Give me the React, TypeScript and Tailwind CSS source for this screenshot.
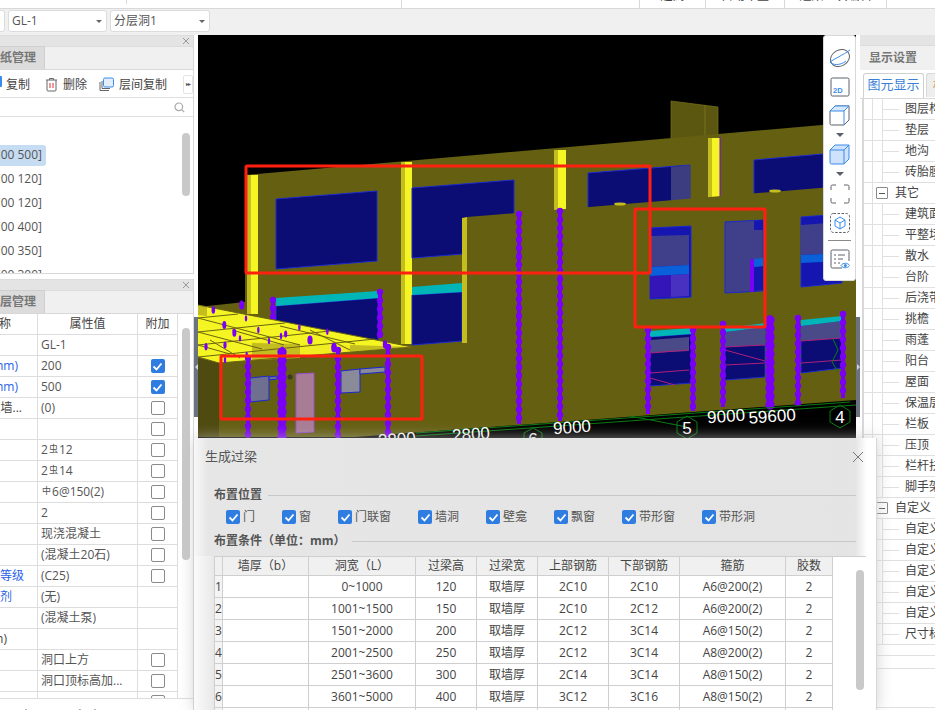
import React from 'react';

const bar = '#7a00f5';

// beaded rebar column in the 3D view
function Rebar({ x, y1, y2, w = 4 }: { x: number; y1: number; y2: number; w?: number }) {
  return (
    <g stroke={bar}>
      <line x1={x} y1={y1} x2={x} y2={y2} strokeWidth={w} />
      <line x1={x} y1={y1} x2={x} y2={y2} strokeWidth={w + 2.4} strokeLinecap="round" strokeDasharray="0.1 8.4" />
    </g>
  );
}

function Poly({ p, f, s, sw = 1 }: { p: string; f: string; s?: string; sw?: number }) {
  return <polygon points={p} fill={f} stroke={s} strokeWidth={s ? sw : 0} />;
}

function Column({ x, top, bottom, split, w }: { x: number; top: number; bottom: number; split: number; w: number }) {
  return (
    <g>
      <rect x={x} y={top} width={split} height={bottom - top} fill="#c4bd20" />
      <rect x={x + split} y={top} width={w - split} height={bottom - top} fill="#f5f523" />
    </g>
  );
}

const slabDots: number[][] = [
  [55, 825, 1.8], [140, 810, 2.6], [88, 870, 2], [153, 850, 1.2], [118, 893, 2], [190, 885, 1.2],
  [313, 877, 1.2], [397, 890, 1.2], [272, 897, 1.6], [258, 903, 1.2], [135, 910, 1.2], [222, 918, 1.2],
  [345, 915, 2.6], [33, 935, 1.6], [90, 930, 1.6], [417, 938, 2.8], [570, 928, 2.2], [262, 945, 1.6], [90, 975, 1.2], [155, 960, 1.2],
];

function Scene() {
  return (
    <svg viewBox="198 35 658 675" className="block w-[658px] h-[675px]">
      <rect x="198" y="35" width="658" height="675" fill="#000" />

      {/* rear wall and what sits on it */}
      <Poly p="671,101 718,107 718,138 671,141" f="#5c5710" s="#777118" sw={0.7} />
      <line x1="705" y1="105" x2="705" y2="138" stroke="#77721a" />
      <Poly p="198,307 245,302 245,175 856,122 856,345 245,400 198,400" f="#655f12" />
      <Column x={247} top={175} bottom={314} split={3.5} w={11} />
      <Column x={401} top={162} bottom={344} split={4} w={11} />
      <Column x={554} top={150} bottom={210} split={4} w={12} />
      <Column x={708} top={138} bottom={198} split={4} w={12} />
      <line x1="720" y1="137" x2="720" y2="198" stroke={bar} />
      <Poly p="276,199 377,191 377,261 276,269" f="#0b0c74" s="#1a2ad0" />
      <Poly p="412,188 514,180 514,250 412,258" f="#0b0c74" s="#1a2ad0" />
      <Poly p="588,173 690,165 690,208 588,216" f="#0b0c74" s="#1a2ad0" />
      <Poly p="671,167 690,165 690,208 671,210" f="#3c3c80" />
      <Poly p="754,160 823,154 823,200 754,205" f="#0b0c74" s="#1a2ad0" />
      <Poly p="276,306 378,298 378,350 276,350" f="#0b0c74" s="#1a2ad0" />
      <Poly p="276,298 378,291 378,298 276,306" f="#00b5b8" />
      <Poly p="412,295 462,292 462,341 412,345" f="#0b0c74" s="#1a2ad0" />
      <Poly p="412,287 462,283 462,292 412,295" f="#00b5b8" />
      <Rebar x={273} y1={300} y2={318} />
      <Rebar x={380} y1={292} y2={338} />

      {/* front wall and low wall */}
      <Poly p="198,358 219,363 219,437 198,437" f="#4f4a10" />
      <Poly p="467,217 856,185 856,400 355,437 219,437 219,363 412,347 467,343" f="#655f12" />
      <Poly p="462,218 467,217 467,343 462,343" f="#c4bd20" />
      <ellipse cx="620" cy="204" rx="6" ry="1.6" fill="#c4bd20" />
      <ellipse cx="775" cy="191" rx="6" ry="1.6" fill="#c4bd20" />

      {/* upper windows of the front wall */}
      <Poly p="650,228 691,226 691,297 650,299" f="#1515b0" s="#1a2ad0" />
      <Poly p="650,236 689,235 689,265 650,267" f="#40408a" />
      <Poly p="650,276 689,274 689,296 650,298" f="#3415b8" />
      <Poly p="671,275 689,274 689,296 671,297" f="#4830c0" />
      <Poly p="650,267 689,265 689,274 650,276" f="#0a60d8" />
      <Poly p="725,222 763,220 763,291 725,293" f="#40408a" s="#1a2ad0" />
      <Poly p="754,221 763,220 763,230 754,230" f="#1515b0" />
      <Poly p="754,267 763,266 763,290 754,291" f="#1515b0" />
      <Poly p="754,259 763,258 763,266 754,267" f="#0a60d8" />
      <line x1="752" y1="261" x2="752" y2="290" stroke={bar} strokeWidth="4" strokeLinecap="round" />
      <Poly p="801,217 842,214 842,283 801,287" f="#1515b0" s="#1a2ad0" />
      <Poly p="801,225 842,222 842,253 801,255" f="#40408a" />
      <Poly p="801,255 842,253 842,261 801,263" f="#0a60d8" />

      {/* lower windows of the front wall */}
      <Poly p="650,337 691,334 691,383 650,386" f="#0b0c74" s="#1a2ad0" />
      <Poly p="650,340 689,337 689,351 650,353" f="#4a4a88" />
      <Poly p="650,331 691,328 691,334 650,337" f="#00b5b8" />
      <polyline points="650,353 689,350" stroke="#b0207a" fill="none" />
      <polyline points="650,373 689,370" stroke="#b0207a" fill="none" />
      <polyline points="650,378 675,385" stroke="#b0207a" fill="none" />
      <Poly p="725,332 765,327 765,377 725,380" f="#0b0c74" s="#1a2ad0" />
      <Poly p="725,332 765,327 765,345 725,347" f="#4a4a88" />
      <Poly p="725,328 765,323 765,327 725,332" f="#00b5b8" />
      <polyline points="725,347 765,345" stroke="#b0207a" fill="none" />
      <polyline points="725,365 765,363" stroke="#b0207a" fill="none" />
      <polyline points="725,350 765,361" stroke="#b0207a" fill="none" />
      <Poly p="801,326 842,321 842,368 801,373" f="#0b0c74" s="#1a2ad0" />
      <Poly p="801,326 842,321 842,338 801,341" f="#4a4a88" />
      <Poly p="801,320 842,316 842,321 801,326" f="#00b5b8" />
      <polyline points="801,341 842,338" stroke="#b0207a" fill="none" />
      <polyline points="801,363 842,360" stroke="#b0207a" fill="none" />
      <polyline points="833,339 838,350 832,362 838,372" stroke="#0a7a1a" fill="none" />

      <Rebar x={519} y1={214} y2={424} />
      <Rebar x={560} y1={211} y2={421} />
      <Rebar x={648} y1={330} y2={414} />
      <Rebar x={693} y1={330} y2={411} />
      <Rebar x={723} y1={324} y2={407} />
      <Rebar x={770} y1={320} y2={405} w={7} />
      <Rebar x={798} y1={318} y2={403} />
      <Rebar x={843} y1={314} y2={398} />

      {/* yellow slab */}
      <Poly p="198,305 412,347 219,363 198,357" f="#f5f523" />
      <Poly p="198,305 207,307 207,316 198,315" f="#c4bd20" />
      <Poly p="252,342 412,347 358,351 252,360" f="#f0ee22" />
      <Poly p="252,343 300,344 300,358 252,360" f="#c4bd20" />
      <Poly p="350,345 412,347 358,351 350,352" f="#c4bd20" />
      <g stroke="#6a6410" strokeWidth="1">
        <line x1="198" y1="318" x2="300" y2="345" />
        <line x1="198" y1="332" x2="262" y2="349" />
        <line x1="198" y1="345" x2="230" y2="354" />
        <line x1="198" y1="318" x2="238" y2="314" />
        <line x1="198" y1="332" x2="285" y2="323" />
        <line x1="198" y1="345" x2="330" y2="331" />
        <line x1="198" y1="357" x2="375" y2="339" />
        <line x1="232" y1="330" x2="284" y2="345" />
        <line x1="280" y1="326" x2="355" y2="344" />
        <line x1="310" y1="330" x2="350" y2="350" />
        <line x1="210" y1="340" x2="240" y2="358" />
        <line x1="198" y1="305" x2="412" y2="347" />
        <line x1="219" y1="363" x2="412" y2="347" />
        <line x1="198" y1="357" x2="219" y2="363" />
      </g>
      {slabDots.map(([x, y, r], i) => (
        <ellipse key={i} cx={195 + x / 3} cy={35 + y / 3} rx={r} ry={r + 2} fill={bar} />
      ))}

      {/* low wall openings */}
      <Poly p="250,378 269,376 269,400 250,402" f="#6f6f90" s="#1a2ad0" />
      <Poly p="269,377 277,376 277,379 269,380" f="#6f6f90" s="#1a2ad0" />
      <Poly p="296,374 314,373 314,432 296,433" f="#a97c96" s="#9a50d0" />
      <circle cx="290" cy="377" r="2.5" fill="#3a3a20" />
      <Poly p="341,371 360,369 360,392 341,393" f="#8a8a98" s="#1a2ad0" />
      <Poly p="360,369 385,367 385,372 360,374" f="#8a8a98" s="#1a2ad0" />
      <Rebar x={248} y1={358} y2={437} />
      <Rebar x={282} y1={352} y2={437} w={7} />
      <Rebar x={338} y1={350} y2={437} />
      <Rebar x={388} y1={347} y2={437} />

      {/* axis grid below the building */}
      <g stroke="#0a7a12" strokeWidth="1" fill="none">
        <line x1="416" y1="433" x2="850" y2="402" />
        <line x1="416" y1="436" x2="856" y2="405" />
        <line x1="630" y1="416" x2="687" y2="427" />
        <polygon points="687,416 697,422 697,433 687,439 677,433 677,422" />
        <polygon points="533,428 542,433 542,443 533,449 524,443 524,433" />
        <polygon points="840,405 850,411 850,422 840,428 830,422 830,411" />
      </g>
      <g fill="#fff" fontSize="17" fontFamily="'Liberation Sans', sans-serif" textAnchor="middle">
        <text x="397" y="445" transform="rotate(-4 397 440)">3800</text>
        <text x="471" y="440" transform="rotate(-4 471 434)">2800</text>
        <text x="572" y="433" transform="rotate(-4 572 427)">9000</text>
        <text x="726" y="422" transform="rotate(-4 726 415)">9000</text>
        <text x="772" y="422" transform="rotate(-4 772 415)">59600</text>
        <text x="533" y="445">6</text>
        <text x="687" y="434">5</text>
        <text x="840" y="423">4</text>
      </g>

      {/* marked regions */}
      <g fill="none" stroke="#ff2010" strokeWidth="3" strokeLinejoin="round">
        <rect x="246" y="166" width="404" height="107" rx="1" />
        <rect x="635" y="209" width="130" height="118" rx="1" />
        <rect x="221" y="356" width="201" height="63" rx="1" />
      </g>
    </svg>
  );
}

function ToolbarIcons() {
  const grey = '#5b6068';
  const blue = '#3b8bea';
  return (
    <div className="absolute right-0 top-0 w-[33px] h-[246px] bg-white border border-[#d8d8d8] rounded-[3px] flex flex-col items-center pt-[11px]">
      <svg width="22" height="22" viewBox="0 0 22 22" fill="none">
        <ellipse cx="11" cy="11" rx="10" ry="8" transform="rotate(-30 11 11)" stroke={grey} />
        <path d="M1 15C5 12 14 8 21 3" stroke={blue} />
        <path d="M1 15C3 18 11 19 17 14" stroke={blue} />
      </svg>
      <svg width="20" height="20" viewBox="0 0 20 20" fill="none" className="mt-[8px]">
        <rect x="1" y="1" width="18" height="18" rx="1.5" stroke={grey} />
        <text x="3" y="16" fontSize="7.5" fontWeight="700" fill={blue} fontFamily="'Liberation Sans', sans-serif">2D</text>
      </svg>
      <svg width="21" height="21" viewBox="0 0 21 21" fill="none" className="mt-[8px]">
        <path d="M1 6L6 1H20V15L15 20H2.5A1.5 1.5 0 0 1 1 18.5Z" stroke={grey} />
        <path d="M1 6L6 1H20L15 6Z" fill="#d8e8fb" stroke={blue} />
        <path d="M15 6V20M15 6L20 1" stroke={blue} />
      </svg>
      <div className="mt-[7px] w-0 h-0 border-x-[4px] border-x-transparent border-t-[4px] border-t-[#5b6068]" />
      <svg width="21" height="21" viewBox="0 0 21 21" fill="none" className="mt-[7px]">
        <path d="M1 6L6 1H20V15L15 20H2.5A1.5 1.5 0 0 1 1 18.5Z" fill="#cfe2fb" stroke={blue} />
        <path d="M1 6H15L20 1M15 6V20" stroke={blue} />
      </svg>
      <div className="mt-[7px] w-0 h-0 border-x-[4px] border-x-transparent border-t-[4px] border-t-[#5b6068]" />
      <svg width="20" height="20" viewBox="0 0 20 20" fill="none" stroke={grey} className="mt-[8px]">
        <path d="M1 6V2.5A1.5 1.5 0 0 1 2.5 1H6M14 1H17.5A1.5 1.5 0 0 1 19 2.5V6M19 14V17.5A1.5 1.5 0 0 1 17.5 19H14M6 19H2.5A1.5 1.5 0 0 1 1 17.5V14" />
      </svg>
      <svg width="20" height="20" viewBox="0 0 20 20" fill="none" className="mt-[9px]">
        <rect x="0.5" y="0.5" width="19" height="19" rx="3" stroke={grey} strokeDasharray="2.5 1.5" />
        <path d="M10 4L15 7V13L10 16L5 13V7ZM5 7L10 10L15 7M10 10V16" stroke={blue} />
      </svg>
      <div className="mt-[7px] w-[23px] h-px bg-[#8a8a8a]" />
      <svg width="20" height="21" viewBox="0 0 20 21" fill="none" className="mt-[8px]">
        <path d="M12 19H2.5A1.5 1.5 0 0 1 1 17.5V2.5A1.5 1.5 0 0 1 2.5 1H17.5A1.5 1.5 0 0 1 19 2.5V12" stroke={grey} />
        <path d="M4 6H6M8 6H15M4 10H6M8 10H13M4 14H6M8 14H10" stroke={grey} />
        <path d="M11 16.5C13 13.5 17.5 13.5 19.8 16.5C17.5 19.5 13 19.5 11 16.5Z" stroke={blue} fill="#fff" />
        <circle cx="15.4" cy="16.5" r="1.5" fill={blue} />
      </svg>
    </div>
  );
}

function Box({ on }: { on: boolean }) {
  if (on) {
    return (
      <span className="flex w-[14px] h-[14px] rounded-[2px] bg-[#2f7de1] items-center justify-center shrink-0">
        <svg width="11" height="11" viewBox="0 0 11 11" fill="none" stroke="#fff" strokeWidth="1.8">
          <path d="M1.5 5.5L4.5 8.5L9.5 2.5" />
        </svg>
      </span>
    );
  }
  return <span className="block w-[14px] h-[14px] rounded-[2px] bg-white border border-[#8a8a8a] shrink-0" />;
}

function PanelHead() {
  return (
    <div className="h-[12px] bg-[#e4e4e4] border-y border-[#dcdcdc] flex justify-end items-center pr-[3px]">
      <svg width="8" height="8" viewBox="0 0 8 8" stroke="#999" fill="none"><path d="M1 1L7 7M7 1L1 7" /></svg>
    </div>
  );
}

function ClipTab({ label }: { label: string }) {
  return (
    <div className="h-[23px] bg-[#f0f0f0] border-b border-[#d8d8d8] flex items-end">
      <div className="w-[45px] h-[23px] bg-[#dcdcdc] border-r border-t border-[#cfcfcf] flex justify-end items-center pr-[8px] text-[12px] font-semibold text-[#777] overflow-hidden whitespace-nowrap">
        {label}
      </div>
    </div>
  );
}

const listItems = ['00 500]', '00 120]', '00 120]', '00 400]', '00 350]', '00 300]'];

type PropRow = { name: string; nameCls: string; value: string; sym?: string; valueEnd?: string; check?: boolean };

const propRows: PropRow[] = [
  { name: '', nameCls: '', value: 'GL-1' },
  { name: '截面宽度(mm)', nameCls: 'text-[#2a62e6] pr-[19px]', value: '200', check: true },
  { name: '截面高度(mm)', nameCls: 'text-[#2a62e6] pr-[19px]', value: '500', check: true },
  { name: '起点伸入墙...', nameCls: 'text-[#444] pr-[15px]', value: '(0)', check: false },
  { name: '', nameCls: '', value: '', check: false },
  { name: '', nameCls: '', value: '2', sym: '虫', valueEnd: '12', check: false },
  { name: '', nameCls: '', value: '2', sym: '虫', valueEnd: '14', check: false },
  { name: '', nameCls: '', value: '', sym: '中', valueEnd: '6@150(2)', check: false },
  { name: '', nameCls: '', value: '2', check: false },
  { name: '', nameCls: '', value: '现浇混凝土', check: false },
  { name: '', nameCls: '', value: '(混凝土20石)', check: false },
  { name: '混凝土强度等级', nameCls: 'text-[#2a62e6] pr-[13px]', value: '(C25)', check: false },
  { name: '混凝土外加剂', nameCls: 'text-[#2a62e6] pr-[25px]', value: '(无)' },
  { name: '', nameCls: '', value: '(混凝土泵)' },
  { name: '(mm)', nameCls: 'text-[#444] pr-[30px]', value: '' },
  { name: '', nameCls: '', value: '洞口上方', check: false },
  { name: '', nameCls: '', value: '洞口顶标高加...', check: false },
  { name: '', nameCls: '', value: '', check: false },
];

function LeftColumn() {
  return (
    <div className="w-[194px] h-full bg-white flex flex-col shrink-0 text-[12px] text-[#444]">
      {/* component list */}
      <div className="h-[239px] border-r border-b border-[#d8d8d8] flex flex-col overflow-hidden">
        <PanelHead />
        <ClipTab label="图纸管理" />
        <div className="h-[28px] pt-[2px] border-b border-[#e0e0e0] flex items-center text-[12px] relative">
          <span className="w-[2px] h-[11px] bg-[#3b8bea] rounded-r-[1px] mb-[6px] mr-[4px]" />
          <span>复制</span>
          <svg width="13" height="15" viewBox="0 0 13 15" fill="none" className="ml-[15px]">
            <path d="M1 3H12M4.5 3V1.5H8.5V3M2 3V13A1 1 0 0 0 3 14H10A1 1 0 0 0 11 13V3" stroke="#666" />
            <path d="M5 6V11M8 6V11" stroke="#e03030" />
          </svg>
          <span className="ml-[5px]">删除</span>
          <svg width="15" height="15" viewBox="0 0 15 15" fill="none" className="ml-[12px]">
            <path d="M1 5V13.5H10" stroke="#666" />
            <path d="M3 4V11.5H11" stroke="#666" />
            <rect x="4.5" y="1" width="10" height="9" rx="1.5" fill="#e2eefc" stroke="#3b8bea" />
          </svg>
          <span className="ml-[5px]">层间复制</span>
          <span className="ml-[16px] w-[10px] h-[19px] border border-[#e4e4e4] rounded-[2px] flex items-center justify-center text-[6px] text-[#555] tracking-[-1px]">▸▸</span>
        </div>
        <div className="h-[19px] border-b border-[#e0e0e0] flex items-center justify-end pr-[8px]">
          <svg width="11" height="11" viewBox="0 0 11 11" fill="none" stroke="#a8a8a8" strokeWidth="1.2">
            <circle cx="4.8" cy="4.8" r="3.8" />
            <path d="M7.6 7.6L10.2 10.2" />
          </svg>
        </div>
        <div className="flex flex-1 overflow-hidden">
          <div className="flex-1 pt-[26px]">
            {listItems.map((t, i) => (
              <div key={i} className="h-[24px] flex items-center">
                <div className={i === 0 ? 'w-[46px] h-[21px] bg-[#c5dcf3] rounded-r-[3px] flex items-center pr-[4px] justify-end' : 'w-[46px] h-[21px] flex items-center pr-[4px] justify-end'}>
                  <span className="text-[#555] whitespace-nowrap">{t}</span>
                </div>
              </div>
            ))}
          </div>
          <div className="w-[8px] h-[63px] mt-[16px] mr-[3px] rounded-[4px] bg-[#c9c9c9]" />
        </div>
      </div>

      <div className="h-[5px]" />

      {/* properties */}
      <div className="flex-1 border-r border-[#d8d8d8] flex flex-col overflow-hidden">
        <PanelHead />
        <ClipTab label="分层管理" />
        <div className="h-[384px] flex overflow-hidden">
          <div className="w-[178px] shrink-0">
            <div className="h-[21px] flex border-b border-[#ddd] text-[#444] bg-white">
              <div className="w-[37px] flex items-center justify-end pr-[26px] whitespace-nowrap overflow-hidden text-[12px]">名称</div>
              <div className="w-[100px] border-l border-[#ddd] flex items-center justify-center text-[12px]">属性值</div>
              <div className="w-[41px] border-x border-[#ddd] flex items-center justify-center text-[12px]">附加</div>
            </div>
            {propRows.map((r, i) => (
              <div key={i} className="h-[21px] flex border-b border-[#ddd]">
                <div className={`w-[37px] flex items-center justify-end overflow-hidden whitespace-nowrap ${r.nameCls}`}>{r.name}</div>
                <div className="w-[100px] border-l border-[#ddd] flex items-center pl-[3px] whitespace-nowrap overflow-hidden text-[#555]">
                  {r.value}
                  {r.sym && <span className="text-[9px] mx-[1px] -mt-[3px]">{r.sym}</span>}
                  {r.valueEnd}
                </div>
                <div className="w-[41px] border-x border-[#ddd] flex items-center justify-center">
                  {r.check !== undefined && <Box on={r.check} />}
                </div>
              </div>
            ))}
          </div>
          <div className="w-[8px] h-[232px] mt-[14px] ml-[4px] rounded-[4px] bg-[#c9c9c9]" />
        </div>
        <div className="flex-1 border-t border-[#ddd] pt-[8px] pl-[8px] bg-white whitespace-nowrap overflow-hidden text-[#555] text-[12px]">
          层高：3.00&nbsp;&nbsp;&nbsp;标高：0.45&nbsp;&nbsp;0.0
        </div>
      </div>
    </div>
  );
}

const treeRows: { t: string; group?: boolean }[] = [
  { t: '图层构件' }, { t: '垫层' }, { t: '地沟' }, { t: '砖胎膜' },
  { t: '其它', group: true },
  { t: '建筑面积' }, { t: '平整场地' }, { t: '散水' }, { t: '台阶' }, { t: '后浇带' }, { t: '挑檐' }, { t: '雨蓬' },
  { t: '阳台' }, { t: '屋面' }, { t: '保温层' }, { t: '栏板' }, { t: '压顶' }, { t: '栏杆扶手' }, { t: '脚手架' },
  { t: '自定义', group: true },
  { t: '自定义点' }, { t: '自定义线' }, { t: '自定义面' }, { t: '自定义贴面' }, { t: '自定义钢筋' }, { t: '尺寸标注' },
];

function RightPanel() {
  return (
    <div className="flex-1 h-full bg-white overflow-hidden text-[12px] text-[#444]">
      <div className="h-[11px] bg-[#e4e4e4] border-b border-[#dcdcdc]" />
      <div className="h-[24px] bg-[#f0f0f0] pl-[9px] flex items-center text-[12px] font-semibold text-[#777]">显示设置</div>
      <div className="h-[29px] flex items-start pt-[3px] pl-[3px] border-b border-[#d8d8d8]">
        <div className="w-[61px] h-[25px] pb-[2px] bg-white border-x border-t border-[#d0d0d0] rounded-t-[3px] flex items-center justify-center text-[13px] text-[#3b82d6] whitespace-nowrap">图元显示</div>
        <div className="ml-[2px] flex-1 h-[24px] bg-[#eeeeee] border-t border-l border-[#d8d8d8] rounded-tl-[3px] pl-[6px] flex items-center text-[12px] text-[#d08a3c] overflow-hidden whitespace-nowrap">构件</div>
      </div>
      <div className="w-[75px] border-l-[2px] border-[#d8d8d8] ml-[2px]">
        {treeRows.map((r, i) => (
          <div key={i} className="h-[21px] flex items-center border-b border-[#e0e0e0] whitespace-nowrap">
            <div className="w-[9px] h-full border-r border-[#e0e0e0] shrink-0" />
            {r.group ? (
              <>
                <div className="w-[12px] h-[12px] ml-[3px] mr-[7px] border border-[#8a8a8a] rounded-[1px] flex items-center justify-center shrink-0">
                  <div className="w-[6px] h-px bg-[#555]" />
                </div>
                <span>{r.t}</span>
              </>
            ) : (
              <>
                <div className="w-[10px] h-full border-r border-[#e0e0e0] shrink-0" />
                <div className="w-[16px] h-px bg-[#e0e0e0] shrink-0" />
                <span className="ml-[6px]">{r.t}</span>
              </>
            )}
          </div>
        ))}
        <div className="h-[11px] border-b border-[#e0e0e0]" />
        <div className="h-[13px] border-b border-[#e0e0e0]" />
        <div className="h-[39px] border-b border-[#e0e0e0]" />
      </div>
    </div>
  );
}

const placeChecks: { t: string; w: string }[] = [
  { t: '门', w: 'w-[56px]' }, { t: '窗', w: 'w-[56px]' }, { t: '门联窗', w: 'w-[80px]' }, { t: '墙洞', w: 'w-[68px]' },
  { t: '壁龛', w: 'w-[68px]' }, { t: '飘窗', w: 'w-[68px]' }, { t: '带形窗', w: 'w-[80px]' }, { t: '带形洞', w: 'w-[80px]' },
];

const beamRows = [
  ['1', '', '0~1000', '120', '取墙厚', '2C10', '2C10', 'A6@200(2)', '2'],
  ['2', '', '1001~1500', '150', '取墙厚', '2C10', '2C12', 'A6@200(2)', '2'],
  ['3', '', '1501~2000', '200', '取墙厚', '2C12', '3C14', 'A6@150(2)', '2'],
  ['4', '', '2001~2500', '250', '取墙厚', '2C12', '3C14', 'A8@200(2)', '2'],
  ['5', '', '2501~3600', '300', '取墙厚', '2C14', '3C14', 'A8@150(2)', '2'],
  ['6', '', '3601~5000', '400', '取墙厚', '3C12', '3C16', 'A8@150(2)', '2'],
  ['', '', '', '', '', '', '', '', ''],
];

const beamHead = ['', '墙厚（b）', '洞宽（L）', '过梁高', '过梁宽', '上部钢筋', '下部钢筋', '箍筋', '胶数'];
const colWidths = ['w-[8px]', 'w-[86px]', 'w-[107px]', 'w-[61px]', 'w-[61px]', 'w-[71px]', 'w-[71px]', 'w-[106px]', 'w-[47px]'];

function Dialog() {
  return (
    <div className="absolute left-[194px] top-[438px] w-[683px] h-[272px] bg-white border-r border-[#d8d8d8] shadow-[0_0_14px_rgba(190,190,190,0.7)] flex flex-col text-[12px] text-[#555]">
      <div className="h-[118px] shrink-0 bg-[linear-gradient(90deg,#f8f8f8_0px,#e6e6e6_14px,#e4e4e4_661px,#ffffff_673px)]">
        <div className="h-[38px] pl-[11px] pr-[12px] flex items-center justify-between">
          <span className="text-[13px] text-[#555]">生成过梁</span>
          <svg width="12" height="12" viewBox="0 0 12 12" fill="none" stroke="#777">
            <path d="M1 1L11 11M11 1L1 11" />
          </svg>
        </div>
        <div className="mt-[11px] h-[16px] pl-[20px] pr-[20px] flex items-center font-bold text-[#555]">
          布置位置
          <div className="flex-1 h-px bg-[#c8c8c8] ml-[6px]" />
        </div>
        <div className="mt-[7px] h-[14px] pl-[32px] flex">
          {placeChecks.map((c) => (
            <label key={c.t} className={`${c.w} flex items-center gap-[3px] shrink-0`}>
              <Box on={true} />
              <span>{c.t}</span>
            </label>
          ))}
        </div>
        <div className="mt-[9px] h-[16px] pl-[20px] pr-[20px] flex items-center font-bold text-[#555]">
          布置条件（单位：mm）
          <div className="flex-1 h-px bg-[#c8c8c8] ml-[6px]" />
        </div>
      </div>
      <div className="flex-1 flex overflow-hidden">
        <div className="w-[20px] shrink-0 bg-[linear-gradient(90deg,#fbfbfb,#e8e8e8)]" />
        <div className="w-[652px] shrink-0 border-t border-[#cfcfcf] flex">
          <table className="table-fixed border-collapse w-[618px] h-fit text-center text-[#444] -mt-px">
            <colgroup>
              {colWidths.map((w, i) => <col key={i} className={w} />)}
            </colgroup>
            <thead>
              <tr className="h-[19px] bg-[#f0f0f0]">
                {beamHead.map((h, i) => (
                  <th key={i} className="border border-[#cfcfcf] font-normal p-0 whitespace-nowrap">{h}</th>
                ))}
              </tr>
            </thead>
            <tbody>
              {beamRows.map((r, i) => (
                <tr key={i} className="h-[22px] bg-white">
                  {r.map((c, j) => (
                    <td key={j} className={j === 0 ? 'border border-[#cfcfcf] p-0 text-left bg-[#f4f4f4] overflow-hidden' : 'border border-[#cfcfcf] p-0'}>{c}</td>
                  ))}
                </tr>
              ))}
            </tbody>
          </table>
          <div className="w-[8px] h-[120px] mt-[13px] ml-[23px] rounded-[4px] bg-[#c9c9c9]" />
        </div>
      </div>
    </div>
  );
}

function SelectBox({ label, cls }: { label: string; cls: string }) {
  return (
    <div className={`${cls} h-[22px] bg-white border border-[#dcdcdc] rounded-[3px] flex items-center justify-between pl-[3px] pr-[4px] text-[12px] text-[#555] shrink-0`}>
      <span>{label}</span>
      <span className="w-0 h-0 border-x-[3px] border-x-transparent border-t-[3px] border-t-[#666]" />
    </div>
  );
}

export default function App() {
  return (
    <div className="relative w-[935px] h-[710px] overflow-hidden bg-[#f0f0f0] [font-family:'Open_Sans','Noto_Sans_CJK_SC',sans-serif]">
      {/* ribbon, only its lower edge is in the picture */}
      <div className="h-[9px] bg-white border-b border-[#d8d8d8] flex overflow-hidden text-[12px] text-[#444] text-center whitespace-nowrap">
        <div className="w-[127px] h-[4px] border-r border-[#d8d8d8]" />
        <div className="w-[275px] border-r border-[#d8d8d8]" />
        <div className="w-[238px] border-r border-[#d8d8d8]" />
        <div className="w-[66px] border-r border-[#d8d8d8] leading-[16px] -mt-[12px] h-[20px]">超高</div>
        <div className="w-[79px] border-r border-[#d8d8d8] leading-[16px] -mt-[12px] h-[20px]">自动布置</div>
        <div className="w-[102px] border-r border-[#d8d8d8] leading-[16px] -mt-[12px] h-[20px]">过梁二次编辑</div>
      </div>
      {/* selector row */}
      <div className="h-[26px] pt-[1px] flex gap-[3px]">
        <div className="w-[5px] h-[22px] bg-white border-y border-r border-[#dcdcdc] rounded-r-[3px]" />
        <SelectBox label="GL-1" cls="w-[99px]" />
        <SelectBox label="分层洞1" cls="w-[100px]" />
      </div>
      <div className="h-[675px] flex">
        <LeftColumn />
        <div className="w-[4px] shrink-0 bg-white">
          <div className="mt-[282px] h-[100px] bg-[#6b7280] flex items-center justify-center">
            <span className="w-0 h-0 border-y-[3px] border-y-transparent border-r-[3px] border-r-[#cfd2d6]" />
          </div>
        </div>
        <div className="relative w-[658px] shrink-0">
          <Scene />
          <ToolbarIcons />
        </div>
        <div className="w-[4px] shrink-0 bg-white">
          <div className="mt-[282px] h-[100px] bg-[#6b7280] flex items-center justify-center">
            <span className="w-0 h-0 border-y-[3px] border-y-transparent border-l-[3px] border-l-[#cfd2d6]" />
          </div>
        </div>
        <RightPanel />
      </div>
      <Dialog />
    </div>
  );
}
